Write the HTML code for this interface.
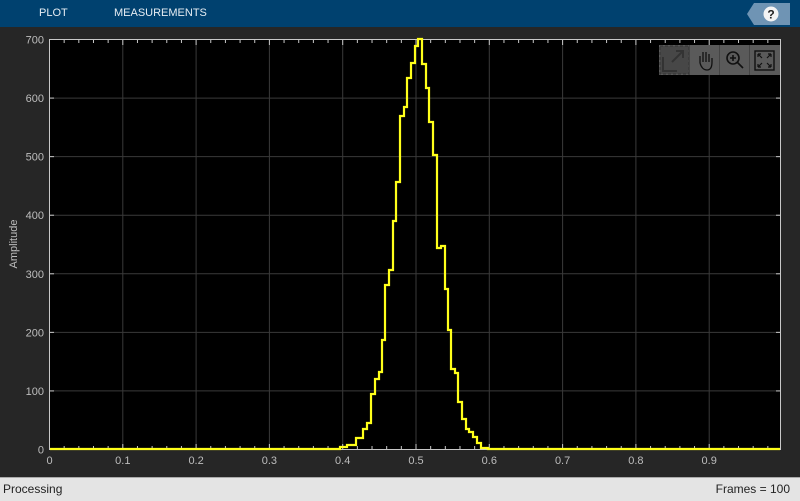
<!DOCTYPE html>
<html><head><style>
body{margin:0;width:800px;height:500px;overflow:hidden;background:#262626;font-family:"Liberation Sans",sans-serif}
.top{position:absolute;left:0;top:0;width:800px;height:27px;background:#00416f}
.tab{position:absolute;top:7px;color:#e6edf3;font-size:11px}
.status{position:absolute;left:0;top:477px;width:800px;height:23px;background:#e4e4e4;border-top:1px solid #aaa;font-size:12px;color:#222}
</style></head><body>
<div class="top">
<span class="tab" style="left:39px">PLOT</span>
<span class="tab" style="left:114px">MEASUREMENTS</span>
<svg style="position:absolute;left:746px;top:3px" width="44" height="22"><polygon points="8,0 44,0 44,22 8,22 1,11" fill="#6f94b4"/><circle cx="25" cy="11" r="7.5" fill="#f4f4f4"/><text x="25" y="15.5" font-size="12" font-weight="bold" text-anchor="middle" fill="#222" font-family="Liberation Sans">?</text></svg>
</div>
<svg style="position:absolute;left:0;top:27px" width="800" height="450" id="p">
<g transform="translate(0,-27)">
<rect x="49.5" y="39.5" width="731" height="410" fill="#000" stroke="#c8c8c8"/>
<g stroke="#3a3a3a" stroke-width="1" id="grid"></g>
<g stroke="#c8c8c8" id="ticks"></g>
<g fill="#bdbdbd" font-size="11" font-family="Liberation Sans" id="lab"></g>
<text x="17" y="244" fill="#bdbdbd" font-size="11" transform="rotate(-90 17 244)" text-anchor="middle">Amplitude</text>
<polyline fill="none" stroke="#ffff1a" stroke-width="2.2" points="50,449 340,449 340,447 347,447 347,445 356,445 356,438 363,438 363,429 367,429 367,423 371,423 371,394 375,394 375,379 379,379 379,372 382,372 382,340 385,340 385,285 389,285 389,270 393,270 393,221 396,221 396,182 400,182 400,116 404,116 404,107 407,107 407,78 411,78 411,63 415,63 415,46 418,46 418,39 422,39 422,64 426,64 426,88 429,88 429,122 433,122 433,155 437,155 437,248 441,248 441,246 445,246 445,289 448,289 448,330 451,330 451,369 455,369 455,373 458,373 458,402 462,402 462,419 466,419 466,429 469,429 469,432 473,432 473,437 477,437 477,443 481,443 481,448 488,448 488,449 780,449"/>
<g transform="translate(659,45)">
<rect width="121" height="30" fill="#5a5a5a"/>
<rect x="1" y="1" width="29" height="28" fill="#474747" stroke="#333" stroke-dasharray="3,2"/>
<path d="M4 12v14h14M13 17l11-11M17 6h7v7" stroke="#333" stroke-width="2" fill="none"/>
<line x1="30.5" y1="0" x2="30.5" y2="30" stroke="#444"/><line x1="60.5" y1="0" x2="60.5" y2="30" stroke="#444"/><line x1="90.5" y1="0" x2="90.5" y2="30" stroke="#444"/>
<path d="M41 18v-7M44 17v-10M47 17v-10M50 17v-8M41 18q2 7 7 7q5 0 5-8v-4" stroke="#111" stroke-width="1.3" fill="none"/>
<circle cx="74" cy="13" r="6" stroke="#111" stroke-width="1.6" fill="none"/><path d="M78 17l6 6M71 13h6M74 10v6" stroke="#111" stroke-width="1.6"/>
<rect x="96" y="6" width="19" height="19" stroke="#111" stroke-width="1.4" fill="none"/><path d="M99 9l4 4M99 9h3M99 9v3M112 9l-4 4M112 9h-3M112 9v3M99 22l4-4M99 22h3M99 22v-3M112 22l-4-4M112 22h-3M112 22v-3" stroke="#111" stroke-width="1.2"/>
</g>
</g></svg>
<div class="status"><span style="position:absolute;left:3px;top:4px">Processing</span><span style="position:absolute;right:10px;top:4px">Frames = 100</span></div>
<script>
var ns="http://www.w3.org/2000/svg",g=document.getElementById('grid'),t=document.getElementById('ticks'),l=document.getElementById('lab');
function ln(p,a,b,c,d){var e=document.createElementNS(ns,'line');e.setAttribute('x1',a);e.setAttribute('y1',b);e.setAttribute('x2',c);e.setAttribute('y2',d);p.appendChild(e);}
function tx(s,x,y,a){var e=document.createElementNS(ns,'text');e.setAttribute('x',x);e.setAttribute('y',y);e.setAttribute('text-anchor',a);e.textContent=s;l.appendChild(e);}
for(var i=0;i<10;i++){var x=49.5+i*73.3;if(i>0)ln(g,x,40,x,449);tx(i==0?'0':'0.'+i,x,464,'middle');}
for(var i=0;i<50;i++){var x=49.5+i*14.66;ln(t,x,40,x,i%5?43:45);ln(t,x,449,x,i%5?446:444);}
for(var j=0;j<=7;j++){var y=449.5-j*58.57;if(j>0&&j<7)ln(g,50,y,780,y);tx(String(j*100),44,y+4,'end');ln(t,50,y,54,y);ln(t,780,y,776,y);}
</script>
</body></html>
